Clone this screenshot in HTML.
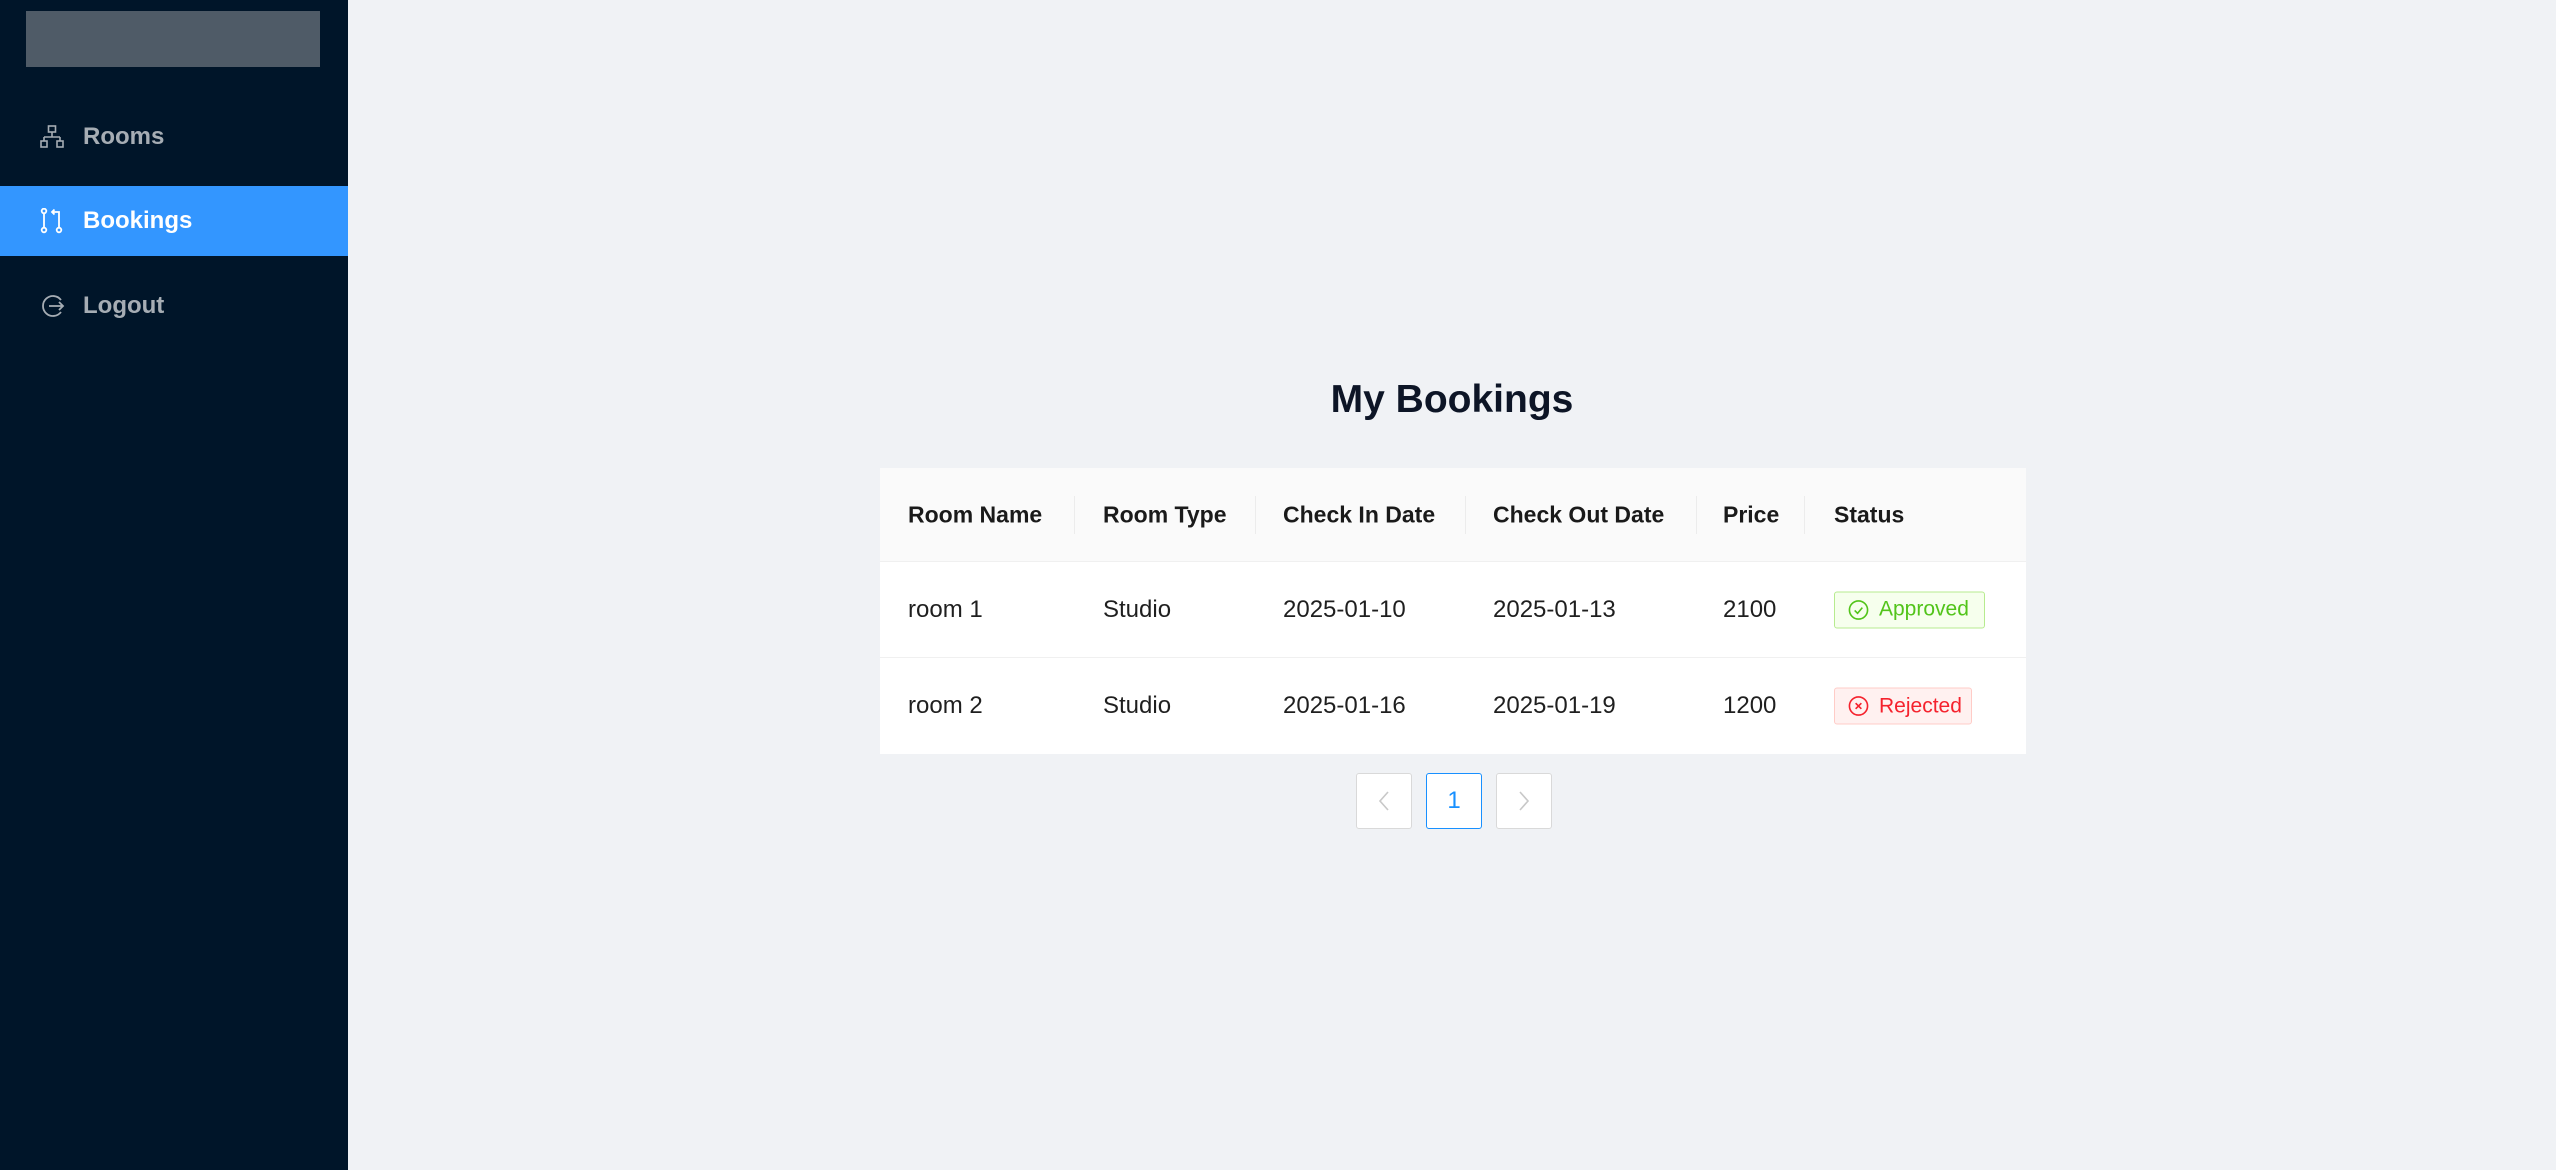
<!DOCTYPE html>
<html><head><meta charset="utf-8"><style>
*{margin:0;padding:0;box-sizing:border-box}
body{width:2556px;height:1170px;background:#f0f2f5;font-family:"Liberation Sans",sans-serif;position:relative;overflow:hidden}
.side{position:absolute;left:0;top:0;width:348px;height:1170px;background:#001529}
.logo{position:absolute;left:26px;top:11px;width:294px;height:56px;background:#4f5b67}
.item{position:absolute;left:0;width:348px;height:70px;display:flex;align-items:center;color:rgba(255,255,255,0.65);font-weight:bold;font-size:24px}
.item svg{position:absolute;left:40px}
.item span{position:absolute;left:83px}
.item.act{background:#3396ff;color:#fff}
h1{position:absolute;left:348px;right:0;top:378px;text-align:center;font-size:39px;font-weight:bold;color:#0d1526}
.tbl{position:absolute;left:880px;top:468px;width:1146px;background:#fff}
.row{position:relative;height:96px;border-bottom:1px solid #f0f0f0;font-size:24px;color:#1f1f1f}
.row.h{background:#fafafa;height:94px;font-weight:bold;color:#1a1a1a;font-size:23px}
.row div{position:absolute;top:50%;transform:translateY(-50%)}
.sep{width:1px;height:38px;background:#ececec}
.tag{height:37px;border-radius:3px;font-size:21px;display:flex;align-items:center;padding-left:13px;font-weight:normal}
.tag svg{margin-right:10px}
.pg{position:absolute;top:773px;width:56px;height:56px;background:#fff;border:1px solid #d9d9d9;border-radius:3px;display:flex;align-items:center;justify-content:center;font-size:24px}
</style></head><body>
<div class="side">
<div class="logo"></div>
<div class="item" style="top:102px"><svg width="24" height="24" viewBox="0 0 24 24" fill="none" stroke="#a6adb4" stroke-width="1.6"><rect x="8.5" y="1" width="7" height="6"/><path d="M12 7v5M4 12h16M4 12v4M20 12v4"/><rect x="1" y="16" width="6" height="6"/><rect x="17" y="16" width="6" height="6"/></svg><span>Rooms</span></div>
<div class="item act" style="top:186px"><svg width="24" height="26" viewBox="0 0 24 26" fill="none" stroke="#fff" stroke-width="1.8"><circle cx="4" cy="3" r="2.3"/><circle cx="4" cy="22" r="2.3"/><path d="M4 5.5v14"/><circle cx="19" cy="22" r="2.3"/><path d="M19 19.5V4h-7M14.5 1.5L12 4l2.5 2.5"/></svg><span>Bookings</span></div>
<div class="item" style="top:271px"><svg width="26" height="26" viewBox="0 0 26 26" fill="none" stroke="#a6adb4" stroke-width="1.8"><path d="M21 7A10 10 0 1 0 21 19"/><path d="M9 13h14M19 9l4 4-4 4"/></svg><span>Logout</span></div>
</div>
<h1>My Bookings</h1>
<div class="tbl">
<div class="row h"><div style="left:28px">Room Name</div><div class="sep" style="left:194px"></div><div style="left:223px">Room Type</div><div class="sep" style="left:375px"></div><div style="left:403px">Check In Date</div><div class="sep" style="left:585px"></div><div style="left:613px">Check Out Date</div><div class="sep" style="left:816px"></div><div style="left:843px">Price</div><div class="sep" style="left:924px"></div><div style="left:954px">Status</div></div>
<div class="row"><div style="left:28px">room 1</div><div style="left:223px">Studio</div><div style="left:403px">2025-01-10</div><div style="left:613px">2025-01-13</div><div style="left:843px">2100</div><div class="tag" style="left:954px;width:151px;background:#f6ffed;border:1px solid #b7eb8f;color:#52c41a"><svg width="21" height="21" viewBox="0 0 22 22" fill="none" stroke="#52c41a" stroke-width="1.7"><circle cx="11" cy="11" r="9.5"/><path d="M7 11.5l3 3 5-6"/></svg>Approved</div></div>
<div class="row" style="border-bottom:none"><div style="left:28px">room 2</div><div style="left:223px">Studio</div><div style="left:403px">2025-01-16</div><div style="left:613px">2025-01-19</div><div style="left:843px">1200</div><div class="tag" style="left:954px;width:138px;background:#fff1f0;border:1px solid #ffccc7;color:#f5222d"><svg width="21" height="21" viewBox="0 0 22 22" fill="none" stroke="#f5222d" stroke-width="1.7"><circle cx="11" cy="11" r="9.5"/><path d="M8 8l6 6M14 8l-6 6"/></svg>Rejected</div></div>
</div>
<div class="pg" style="left:1356px"><svg width="14" height="22" viewBox="0 0 14 22" fill="none" stroke="#c8c8c8" stroke-width="1.6"><path d="M11 2L3 11l8 9"/></svg></div>
<div class="pg" style="left:1426px;border-color:#1890ff;color:#1890ff">1</div>
<div class="pg" style="left:1496px"><svg width="14" height="22" viewBox="0 0 14 22" fill="none" stroke="#c8c8c8" stroke-width="1.6"><path d="M3 2l8 9-8 9"/></svg></div>
</body></html>
